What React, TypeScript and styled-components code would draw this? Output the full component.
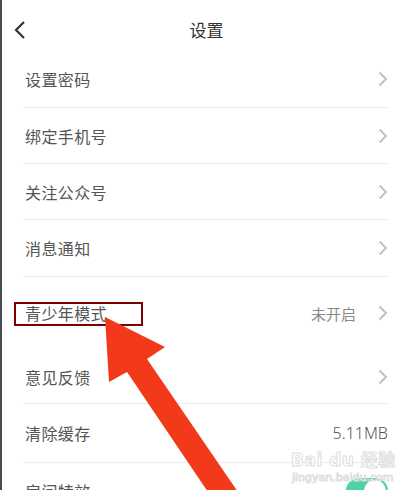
import React from 'react';
import styled, { createGlobalStyle } from 'styled-components';

const GlobalStyle = createGlobalStyle`
  html, body {
    margin: 0;
    padding: 0;
    background: #fff;
    overflow: hidden;
  }
  body {
    font-family: "Noto Sans CJK SC", "Noto Sans", sans-serif;
  }
`;

const SCPage = styled.div`
  position: relative;
  width: 407px;
  height: 490px;
  box-sizing: border-box;
  border-left: 2px solid #4a4a4a;
  background: #fff;
  overflow: hidden;
`;

const SCHeader = styled.div`
  position: relative;
  height: 51px;
  display: flex;
  align-items: center;
  justify-content: center;
`;

const SCBack = styled.div`
  position: absolute;
  left: 11px;
  top: 20px;
  width: 14px;
  height: 20px;
`;

const SCTitle = styled.div`
  font-size: 17px;
  color: #333;
  margin-top: 8px;
  margin-left: 4px;
`;

const SCRow = styled.div<{ h: number; line: boolean }>`
  display: flex;
  align-items: center;
  flex-shrink: 0;
  height: ${({ h }) => h}px;
  margin: 0 19px 0 21px;
  box-sizing: border-box;
  border-bottom: 1px solid ${({ line }) => (line ? '#ececec' : 'transparent')};
`;

const SCLabel = styled.div`
  flex: 1;
  padding-left: 2px;
  font-size: 16px;
  color: #555;
  letter-spacing: 0.4px;
`;

const SCValue = styled.div<{ gap: number }>`
  font-size: 15px;
  color: #888;
  margin-right: ${({ gap }) => gap}px;
`;

const SCSize = styled.div`
  font-family: "Noto Sans", sans-serif;
  font-size: 16px;
  color: #555;
  font-weight: 300;
`;

const SCToggle = styled.div`
  position: relative;
  width: 42px;
  height: 26px;
  border-radius: 13px;
  background: #4dd3a2;
  &::after {
    content: '';
    position: absolute;
    right: 2px;
    top: 2px;
    width: 22px;
    height: 22px;
    border-radius: 50%;
    background: #fff;
  }
`;

const SCHighlight = styled.div`
  position: absolute;
  left: 12px;
  top: 302px;
  width: 129px;
  height: 24px;
  border: 2px solid #7c0000;
  box-sizing: border-box;
`;

const SCArrow = styled.svg`
  position: absolute;
  left: 0;
  top: 0;
  pointer-events: none;
`;

const SCWatermark = styled.div`
  position: absolute;
  left: 289px;
  top: 452px;
  color: #fff;
  -webkit-text-stroke: 1px #e0e0e0;
  font-family: "DejaVu Sans", "Noto Sans CJK SC", sans-serif;
  line-height: 1;
`;

const SCMarkBig = styled.div`
  font-size: 17px;
  font-weight: bold;
  letter-spacing: 0.5px;
`;

const SCMarkSmall = styled.div`
  font-size: 11px;
  margin-top: 3px;
  margin-left: 1px;
`;

const Chevron = () => (
  <svg width="10" height="16" viewBox="0 0 10 16">
    <path d="M1.5 1.5 L8 8 L1.5 14.5" fill="none" stroke="#c2c2c2" strokeWidth="2" />
  </svg>
);

interface IItem {
  label: string;
  h: number;
  line: boolean;
  right?: 'chevron' | 'off' | 'size' | 'toggle';
}

const items: IItem[] = [
  { label: '设置密码', h: 57, line: true, right: 'chevron' },
  { label: '绑定手机号', h: 56, line: true, right: 'chevron' },
  { label: '关注公众号', h: 56, line: true, right: 'chevron' },
  { label: '消息通知', h: 57, line: true, right: 'chevron' },
  { label: '青少年模式', h: 73, line: false, right: 'off' },
  { label: '意见反馈', h: 54, line: true, right: 'chevron' },
  { label: '清除缓存', h: 59, line: true, right: 'size' },
  { label: '房间特效', h: 57, line: false, right: 'toggle' },
];

const App = () => {
  return (
    <SCPage>
      <GlobalStyle />
      <SCHeader>
        <SCBack>
          <svg width="14" height="20" viewBox="0 0 14 20">
            <path d="M11 2 L3 10 L11 18" fill="none" stroke="#333" strokeWidth="2.2" />
          </svg>
        </SCBack>
        <SCTitle>设置</SCTitle>
      </SCHeader>

      {items.map((el, idx) => (
        <SCRow key={idx} h={el.h} line={el.line}>
          <SCLabel>{el.label}</SCLabel>
          {el.right === 'off' && <SCValue gap={22}>未开启</SCValue>}
          {(el.right === 'chevron' || el.right === 'off') && <Chevron />}
          {el.right === 'size' && <SCSize>5.11MB</SCSize>}
          {el.right === 'toggle' && <SCToggle />}
        </SCRow>
      ))}

      <SCWatermark>
        <SCMarkBig>Bai du 经验</SCMarkBig>
        <SCMarkSmall>jingyan.baidu.com</SCMarkSmall>
      </SCWatermark>

      <SCHighlight />

      <SCArrow width="407" height="490" viewBox="0 0 407 490">
        <polygon
          points="103,317 163,347 145,359 236,492 206,492 125,372 107,382"
          fill="#f2391a"
        />
      </SCArrow>
    </SCPage>
  );
};

export default App;
